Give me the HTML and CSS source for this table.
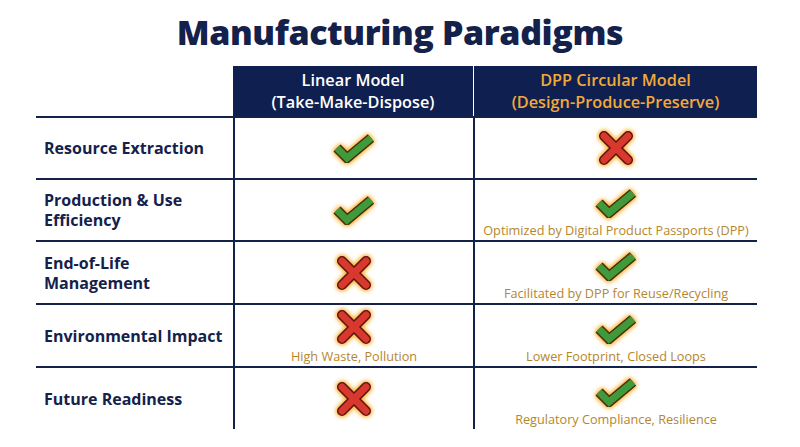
FILE: index.html
```html
<!DOCTYPE html>
<html>
<head>
<meta charset="utf-8">
<link rel="stylesheet" href="styles.css">
</head>
<body>
<svg width="0" height="0" class="defs">
  <defs>
    <symbol id="check" viewBox="0 0 44 30">
      <polyline points="5,15 15,25 39,5" fill="none" stroke="#4a2c0c" stroke-width="10" stroke-linejoin="miter" stroke-linecap="butt"/>
      <polyline points="5,15 15,25 39,5" fill="none" stroke="#3f9a3c" stroke-width="7" stroke-linejoin="miter" stroke-linecap="butt"/>
    </symbol>
    <symbol id="cross" viewBox="0 0 38 34">
      <path d="M7,5 L31,29 M31,5 L7,29" fill="none" stroke="#5a1410" stroke-width="10" stroke-linecap="round"/>
      <path d="M7,5 L31,29 M31,5 L7,29" fill="none" stroke="#d9382f" stroke-width="7" stroke-linecap="round"/>
    </symbol>
  </defs>
</svg>
<h1 class="title">Manufacturing Paradigms</h1>
<div class="table">
  <div class="hcell blank"></div>
  <div class="hcell head"><span class="hl">Linear Model</span><span class="hl">(Take-Make-Dispose)</span></div>
  <div class="hcell head orange"><span class="hl">DPP Circular Model</span><span class="hl">(Design-Produce-Preserve)</span></div>

  <div class="cell label">Resource Extraction</div>
  <div class="cell mark"><svg class="ico chk"><use href="#check"/></svg></div>
  <div class="cell mark"><svg class="ico crs"><use href="#cross"/></svg></div>

  <div class="cell label">Production &amp; Use<br>Efficiency</div>
  <div class="cell mark"><svg class="ico chk"><use href="#check"/></svg></div>
  <div class="cell mark cap-cell"><svg class="ico chk"><use href="#check"/></svg><span class="cap">Optimized by Digital Product Passports (DPP)</span></div>

  <div class="cell label">End-of-Life<br>Management</div>
  <div class="cell mark"><svg class="ico crs"><use href="#cross"/></svg></div>
  <div class="cell mark cap-cell"><svg class="ico chk"><use href="#check"/></svg><span class="cap">Facilitated by DPP for Reuse/Recycling</span></div>

  <div class="cell label">Environmental Impact</div>
  <div class="cell mark cap-cell"><svg class="ico crs"><use href="#cross"/></svg><span class="cap">High Waste, Pollution</span></div>
  <div class="cell mark cap-cell"><svg class="ico chk"><use href="#check"/></svg><span class="cap">Lower Footprint, Closed Loops</span></div>

  <div class="cell label">Future Readiness</div>
  <div class="cell mark"><svg class="ico crs"><use href="#cross"/></svg></div>
  <div class="cell mark cap-cell"><svg class="ico chk"><use href="#check"/></svg><span class="cap">Regulatory Compliance, Resilience</span></div>
</div>
</body>
</html>
```
FILE: styles.css
```css
html, body {
  margin: 0;
  padding: 0;
  background: #ffffff;
}
body {
  width: 800px;
  height: 447px;
  overflow: hidden;
  font-family: "Open Sans", "Liberation Sans", sans-serif;
  color: #14214a;
}
.defs {
  position: absolute;
  width: 0;
  height: 0;
}
.title {
  margin: 0;
  padding-top: 10px;
  height: 56px;
  box-sizing: border-box;
  text-align: center;
  font-size: 34px;
  line-height: 44px;
  font-weight: 800;
  color: #14214a;
  letter-spacing: -0.4px;
}
.table {
  margin-left: 36px;
  margin-top: 10px;
  display: grid;
  grid-template-columns: 197px 240px 284px;
  grid-template-rows: 50px 62px 62px 63px 63px 63px;
}
.hcell.head {
  background: #0f1f4f;
  color: #ffffff;
  font-weight: 600;
  font-size: 16.3px;
  text-align: center;
  display: flex;
  flex-direction: column;
  align-items: center;
  justify-content: center;
}
.hl {
  display: block;
  line-height: 22px;
  height: 22px;
}
.hcell.head.orange {
  color: #f2a93b;
  margin-left: 1px;
}
.cell {
  border-top: 2px solid #14214a;
  box-sizing: border-box;
}
.cell.label {
  display: flex;
  align-items: center;
  padding-left: 8px;
  font-weight: 700;
  font-size: 16px;
  line-height: 20px;
  color: #14214a;
}
.cell.mark {
  border-left: 2px solid #14214a;
  display: flex;
  flex-direction: column;
  align-items: center;
  justify-content: center;
}
.cell.cap-cell {
  justify-content: flex-end;
  padding-bottom: 2px;
}
.ico.chk {
  width: 44px;
  height: 30px;
  filter: drop-shadow(0 0 2px #f7a21b) drop-shadow(0 0 2px #fbc45a);
}
.ico.crs {
  width: 38px;
  height: 34px;
  filter: drop-shadow(0 0 2px #f7a21b) drop-shadow(0 0 2px #fbc45a);
}
.cap {
  margin-top: 4px;
  font-size: 12.7px;
  line-height: 16px;
  color: #b5862d;
  white-space: nowrap;
}
```
